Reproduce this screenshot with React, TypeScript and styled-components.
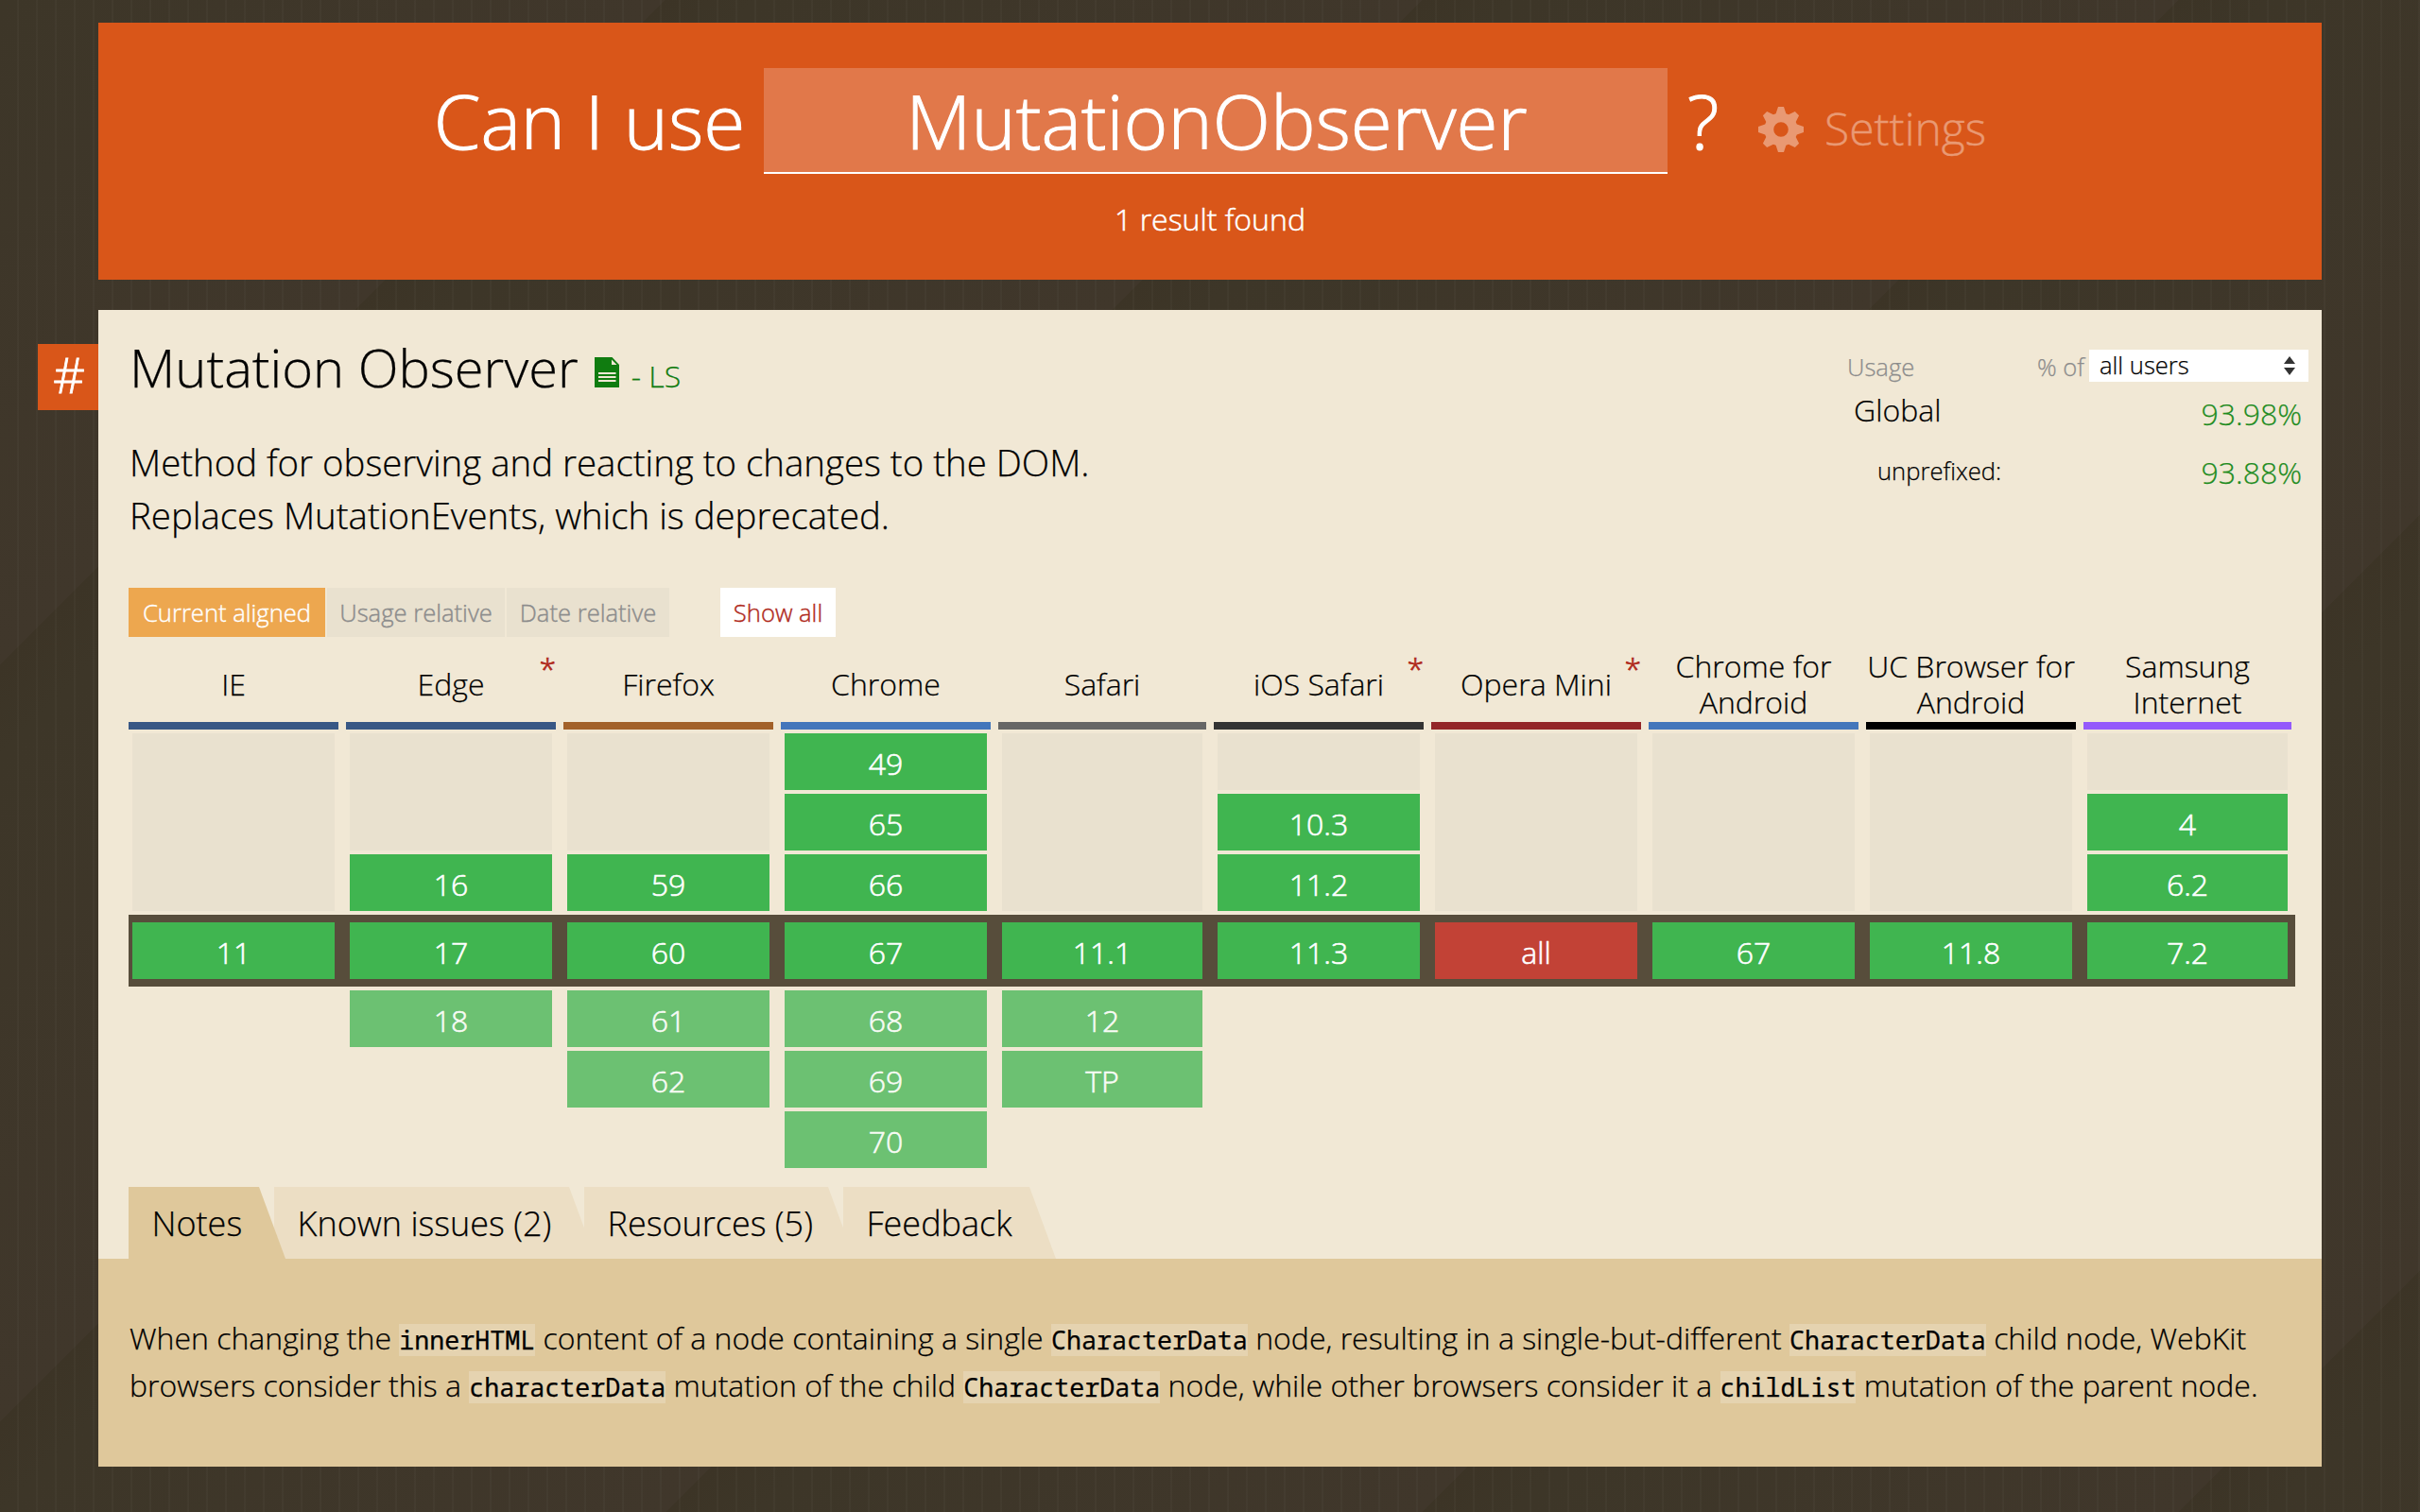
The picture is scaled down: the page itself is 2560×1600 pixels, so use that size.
import React from "react";
import styled, { createGlobalStyle } from "styled-components";

const Global = createGlobalStyle`
  *, *::before, *::after { box-sizing: border-box; }
  html, body { margin: 0; padding: 0; }
  body { background: #3f372a; }
`;

const Page = styled.div`
  width: 2560px;
  height: 1600px;
  overflow: hidden;
  padding: 24px 104px 48px;
  display: flex;
  flex-direction: column;
  gap: 32px;
  font-family: "Open Sans", "Noto Sans", sans-serif;
  font-weight: 300;
  font-size: 32px;
  color: #000;
  -webkit-text-stroke: 0.25px currentColor;
  background:
    repeating-linear-gradient(90deg, transparent 0 18px, rgba(255, 255, 255, 0.022) 18px 20px),
    repeating-linear-gradient(135deg, #3d3628 0, #40372b 497.8px, #3c3426 497.8px, #3d3628 565.7px);
`;

/* ---------- search header ---------- */

const Header = styled.header`
  height: 272px;
  padding-top: 48px;
  background: #d95619;
  color: #fff;
  display: flex;
  flex-direction: column;
`;

const SearchRow = styled.div`
  display: flex;
  align-items: flex-start;
  height: 112px;
  padding-left: 354.8px;
  font-size: 80px;
  line-height: 109px;
  white-space: nowrap;
  -webkit-text-stroke: 1px #fff;
`;

const SearchField = styled.div`
  width: 956px;
  height: 112px;
  margin: 0 20.8px 0 19.8px;
  padding-left: 2px;
  text-align: center;
  background: #e1784a;
  border-bottom: 2px solid #fff;
`;

const QuestionMark = styled.span`
  width: 74.7px;
`;

const SettingsLink = styled.a`
  display: flex;
  gap: 22.5px;
  font-size: 48px;
  line-height: 127px;
  color: #e99973;
  -webkit-text-stroke: 0.4px #e99973;

  svg {
    margin-top: 41px;
  }
`;

const ResultCount = styled.div`
  margin-top: 25px;
  line-height: 46px;
  text-align: center;
  -webkit-text-stroke: 0.5px #fff;
`;

/* ---------- feature card ---------- */

const Card = styled.main`
  position: relative;
  flex: 1;
  display: flex;
  flex-direction: column;
  padding-top: 22px;
  background: #f1e8d5;
`;

const Anchor = styled.a`
  position: absolute;
  left: -64px;
  top: 36px;
  width: 64px;
  height: 70px;
  padding-left: 2px;
  background: #d95619;
  color: #fff;
  font-size: 52px;
  line-height: 63px;
  text-align: center;
  -webkit-text-stroke: 0.8px #fff;
`;

const Top = styled.div`
  height: 272px;
  padding: 0 14px 0 33px;
  display: flex;
  justify-content: space-between;
`;

const TitleRow = styled.div`
  display: flex;
  align-items: baseline;
  height: 76px;
`;

const Title = styled.h1`
  margin: 0 17px 0 0;
  font-size: 56px;
  font-weight: 300;
  line-height: 76px;
`;

const Status = styled.a`
  display: flex;
  align-items: baseline;
  gap: 13px;
  color: #107c10;

  svg {
    margin-bottom: -2px;
  }
`;

const Description = styled.p`
  margin: 34.5px 0 0;
  font-size: 38.4px;
  line-height: 56px;
`;

const Usage = styled.section`
  width: 488px;
  padding-top: 20px;
`;

const UsageHead = styled.div`
  display: flex;
  height: 36.6px;
  font-size: 25.6px;
  line-height: 38px;
  color: #8c8c8c;

  span:first-child {
    flex: 1;
  }
`;

const Select = styled.div`
  width: 232px;
  height: 34px;
  margin-left: 5px;
  padding: 0 14px 0 11px;
  display: flex;
  align-items: center;
  justify-content: space-between;
  background: #fff;
  color: #000;
`;

const UsageRow = styled.div`
  display: flex;
  justify-content: space-between;
  height: 62px;
  line-height: 62px;
  padding-right: 7px;
`;

const UsageLabel = styled.span<{ $nested?: boolean }>`
  margin-left: ${(p) => (p.$nested ? 32 : 7)}px;
  margin-top: ${(p) => (p.$nested ? -0.5 : -4)}px;
  font-size: ${(p) => (p.$nested ? 25.6 : 32)}px;
`;

const UsageValue = styled.span`
  color: #1e8c1e;
`;

const ViewButtons = styled.div`
  display: flex;
  gap: 2px;
  padding-left: 32px;
`;

const ViewButton = styled.div<{ $w: number; $kind?: "active" | "showAll" }>`
  width: ${(p) => p.$w}px;
  height: 52px;
  line-height: 53px;
  font-size: 25.6px;
  text-align: center;
  white-space: nowrap;
  margin-left: ${(p) => (p.$kind === "showAll" ? 52 : 0)}px;
  background: ${(p) => (p.$kind === "active" ? "#eda74f" : p.$kind === "showAll" ? "#fff" : "#e9e1cf")};
  color: ${(p) => (p.$kind === "active" ? "#fff" : p.$kind === "showAll" ? "#b02a1c" : "#8c8c8c")};
  -webkit-text-stroke: 0.4px currentColor;
`;

/* ---------- support table ---------- */

const Columns = styled.div`
  display: grid;
  grid-template-columns: repeat(4, 222px) 220px repeat(4, 222px) 220px;
  column-gap: 8px;
  padding-left: 32px;
`;

const Heading = styled.div<{ $bar: string }>`
  position: relative;
  height: 98px;
  padding-top: 10px;
  display: flex;
  align-items: center;
  justify-content: center;
  text-align: center;
  white-space: pre;
  line-height: 38px;
  border-bottom: 8px solid ${(p) => p.$bar};
`;

const Star = styled.span`
  position: absolute;
  top: 14px;
  right: 0;
  color: #b02a1c;
  -webkit-text-stroke: 0.7px #b02a1c;
`;

const Past = styled(Columns)`
  height: 188px;
  margin: 4px 0;
`;

const Current = styled(Columns)`
  width: 2292px;
  margin-left: 32px;
  padding: 8px 0;
  background: #574d3b;
`;

const Future = styled(Columns)`
  height: 188px;
  margin: 4px 0 20px;
`;

const Stack = styled.div`
  display: flex;
  flex-direction: column;
  gap: 4px;
  padding: 0 4px;
`;

const NoData = styled.div`
  flex: 1;
  background: #e9e1cf;
`;

const Cell = styled.div<{ $tone?: "no" | "future" }>`
  height: 60px;
  line-height: 63px;
  text-align: center;
  color: ${(p) => (p.$tone === "future" ? "#f8fbf5" : "#fff")};
  background: ${(p) => (p.$tone === "no" ? "#c24236" : p.$tone === "future" ? "#6cc172" : "#40b550")};
  -webkit-text-stroke: 0.6px currentColor;
`;

/* ---------- tabs and notes ---------- */

const Tabs = styled.nav`
  display: flex;
  padding-left: 32px;
`;

const Tab = styled.div<{ $w: number; $active?: boolean }>`
  position: relative;
  z-index: ${(p) => (p.$active ? 1 : 0)};
  width: ${(p) => p.$w + 28}px;
  height: 76px;
  margin-right: -12px;
  padding-left: 24.5px;
  font-size: 36px;
  line-height: 78px;
  white-space: nowrap;
  background: ${(p) => (p.$active ? "#dfc89b" : "#ecdec4")};
  clip-path: polygon(0 0, calc(100% - 28px) 0, 100% 100%, 0 100%);
`;

const Notes = styled.section`
  flex: 1;
  padding: 58.6px 32px 0 33px;
  line-height: 50px;
  white-space: nowrap;
  background: #dfc89b;
`;

const Code = styled.code`
  display: inline-block;
  line-height: 34px;
  font-family: "Noto Sans Mono", "DejaVu Sans Mono", monospace;
  font-size: 26.67px;
  font-weight: 400;
  background: #e5d3b0;
`;

const gearPath = Array.from({ length: 8 }, (_, i) => {
  const a = (i * Math.PI) / 4;
  const corners = [[-5.4, -16.8], [-3, -24], [3, -24], [5.4, -16.8]];
  return corners
    .map(([x, y]) => {
      const px = 24 + x * Math.cos(a) - y * Math.sin(a);
      const py = 24 + x * Math.sin(a) + y * Math.cos(a);
      return `${px.toFixed(2)} ${py.toFixed(2)}`;
    })
    .join("L");
}).join("L");

const Gear = () => (
  <svg width="48" height="48" viewBox="0 0 48 48" fill="currentColor">
    <path fillRule="evenodd" d={`M${gearPath}ZM24 16.2a7.8 7.8 0 1 0 0 15.6a7.8 7.8 0 1 0 0-15.6Z`} />
  </svg>
);

const DocIcon = () => (
  <svg width="26" height="32" viewBox="0 0 26 32" fill="currentColor">
    <path fillRule="evenodd" d="M0 0H18.5L26 8V32H0ZM18 2.5V8H23.5ZM4 16V18H22.5V16ZM4 20V22H22.5V20ZM4 24V26H22.5V24Z" />
  </svg>
);

const Arrows = () => (
  <svg width="12" height="20" viewBox="0 0 12 20" fill="#333">
    <path d="M6 0L12 8H0ZM0 12H12L6 20Z" />
  </svg>
);

type Browser = {
  name: string;
  bar: string;
  star?: boolean;
  past: string[];
  now: string;
  next: string[];
  unsupported?: boolean;
};

const browsers: Browser[] = [
  { name: "IE", bar: "#385785", past: [], now: "11", next: [] },
  { name: "Edge", bar: "#385785", star: true, past: ["16"], now: "17", next: ["18"] },
  { name: "Firefox", bar: "#a2612a", past: ["59"], now: "60", next: ["61", "62"] },
  { name: "Chrome", bar: "#4376bb", past: ["49", "65", "66"], now: "67", next: ["68", "69", "70"] },
  { name: "Safari", bar: "#666666", past: [], now: "11.1", next: ["12", "TP"] },
  { name: "iOS Safari", bar: "#333333", star: true, past: ["10.3", "11.2"], now: "11.3", next: [] },
  { name: "Opera Mini", bar: "#932628", star: true, past: [], now: "all", next: [], unsupported: true },
  { name: "Chrome for\nAndroid", bar: "#4376bb", past: [], now: "67", next: [] },
  { name: "UC Browser for\nAndroid", bar: "#000000", past: [], now: "11.8", next: [] },
  { name: "Samsung\nInternet", bar: "#9459fb", past: ["4", "6.2"], now: "7.2", next: [] },
];

export default function App() {
  return (
    <>
      <Global />
      <Page>
        <Header>
          <SearchRow>
            <span>Can I use</span>
            <SearchField>MutationObserver</SearchField>
            <QuestionMark>?</QuestionMark>
            <SettingsLink>
              <Gear />
              Settings
            </SettingsLink>
          </SearchRow>
          <ResultCount>1 result found</ResultCount>
        </Header>

        <Card>
          <Anchor>#</Anchor>
          <Top>
            <div>
              <TitleRow>
                <Title>Mutation Observer</Title>
                <Status>
                  <DocIcon />
                  <span>- LS</span>
                </Status>
              </TitleRow>
              <Description>
                Method for observing and reacting to changes to the DOM.
                <br />
                Replaces MutationEvents, which is deprecated.
              </Description>
            </div>
            <Usage>
              <UsageHead>
                <span>Usage</span>
                <span>% of</span>
                <Select>
                  <span>all users</span>
                  <Arrows />
                </Select>
              </UsageHead>
              <UsageRow>
                <UsageLabel>Global</UsageLabel>
                <UsageValue>93.98%</UsageValue>
              </UsageRow>
              <UsageRow>
                <UsageLabel $nested>unprefixed:</UsageLabel>
                <UsageValue>93.88%</UsageValue>
              </UsageRow>
            </Usage>
          </Top>

          <ViewButtons>
            <ViewButton $w={208} $kind="active">Current aligned</ViewButton>
            <ViewButton $w={188}>Usage relative</ViewButton>
            <ViewButton $w={172}>Date relative</ViewButton>
            <ViewButton $w={122} $kind="showAll">Show all</ViewButton>
          </ViewButtons>

          <Columns>
            {browsers.map((b) => (
              <Heading key={b.name} $bar={b.bar}>
                {b.name}
                {b.star && <Star>*</Star>}
              </Heading>
            ))}
          </Columns>
          <Past>
            {browsers.map((b) => (
              <Stack key={b.name}>
                {b.past.length < 3 && <NoData />}
                {b.past.map((v) => (
                  <Cell key={v}>{v}</Cell>
                ))}
              </Stack>
            ))}
          </Past>
          <Current>
            {browsers.map((b) => (
              <Stack key={b.name}>
                <Cell $tone={b.unsupported ? "no" : undefined}>{b.now}</Cell>
              </Stack>
            ))}
          </Current>
          <Future>
            {browsers.map((b) => (
              <Stack key={b.name}>
                {b.next.map((v) => (
                  <Cell key={v} $tone="future">{v}</Cell>
                ))}
              </Stack>
            ))}
          </Future>

          <Tabs>
            <Tab $w={138} $active>Notes</Tab>
            <Tab $w={312}>Known issues (2)</Tab>
            <Tab $w={258}>Resources (5)</Tab>
            <Tab $w={197}>Feedback</Tab>
          </Tabs>
          <Notes>
            When changing the <Code>innerHTML</Code> content of a node containing a single <Code>CharacterData</Code> node,
            resulting in a single-but-different <Code>CharacterData</Code> child node, WebKit
            <br />
            browsers consider this a <Code>characterData</Code> mutation of the child <Code>CharacterData</Code> node, while
            other browsers consider it a <Code>childList</Code> mutation of the parent node.
          </Notes>
        </Card>
      </Page>
    </>
  );
}
